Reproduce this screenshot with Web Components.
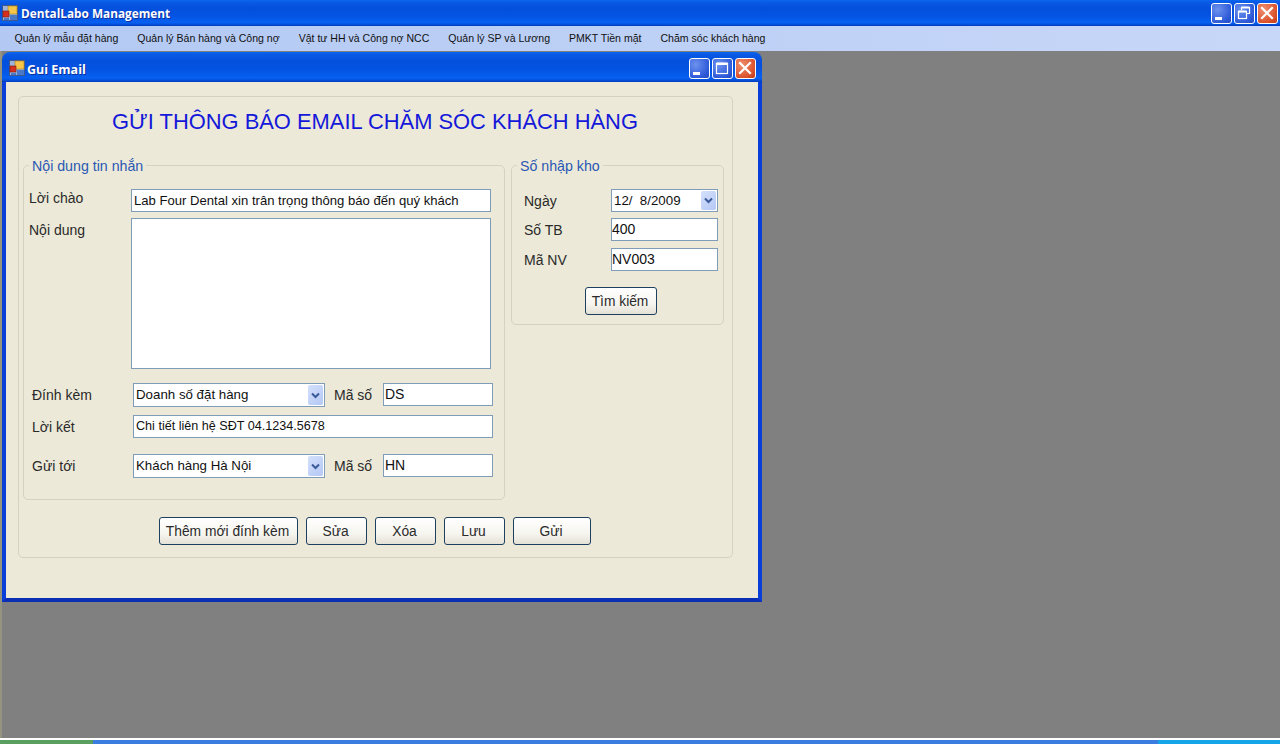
<!DOCTYPE html>
<html lang="vi">
<head>
<meta charset="utf-8">
<title>DentalLabo Management</title>
<style>
  html, body { margin: 0; height: 100%; overflow: hidden; background: #808080; }
</style>
</head>
<body>

<xp-desktop>
  <xp-titlebar slot="title" height="26" icon-left="2" gap="3" right="2" top="0" text="11.8" shift="0" radius="0">DentalLabo Management</xp-titlebar>
  <xp-menubar slot="menu">
    <xp-menuitem>Quản lý mẫu đặt hàng</xp-menuitem>
    <xp-menuitem>Quản lý Bán hàng và Công nợ</xp-menuitem>
    <xp-menuitem>Vật tư HH và Công nợ NCC</xp-menuitem>
    <xp-menuitem>Quản lý SP và Lương</xp-menuitem>
    <xp-menuitem>PMKT Tiền mặt</xp-menuitem>
    <xp-menuitem>Chăm sóc khách hàng</xp-menuitem>
  </xp-menubar>
  <xp-window>
    <xp-titlebar slot="title" height="30" icon-left="7" gap="2" right="6" top="2" text="12.5" shift="2" radius="8" size="maximize">Gui Email</xp-titlebar>
    <email-form></email-form>
  </xp-window>
</xp-desktop>

<script>
const FONT = `"Liberation Sans", Arial, sans-serif`

const APP_ICON = /*html*/`
  <svg width="16" height="16" viewBox="0 0 16 16" aria-hidden="true">
    <rect x="0.5" y="0.5" width="15" height="15" fill="#9db4d8" stroke="#3d5a90"/>
    <rect x="6" y="1" width="9" height="8" fill="#f6c64a" stroke="#a97f1c" stroke-width="0.6"/>
    <rect x="1" y="6" width="6" height="6" fill="#d8301f" stroke="#7d1a10" stroke-width="0.6"/>
    <rect x="8" y="10" width="7" height="5" fill="#4b78c8"/>
    <rect x="2" y="13" width="5" height="2" fill="#4b78c8"/>
  </svg>`

const GLYPHS = {
  min: `<rect x="4" y="14" width="7" height="3" fill="#fff"/>`,
  restore: `<path d="M7.5 7V4.5h8v6H13" fill="none" stroke="#fff" stroke-width="1.2"/><rect x="7.5" y="3.5" width="8" height="2" fill="#fff"/><rect x="4.5" y="8.5" width="8" height="7" fill="none" stroke="#fff" stroke-width="1.2"/><rect x="4.5" y="7.5" width="8" height="2" fill="#fff"/>`,
  maximize: `<rect x="4.5" y="5.5" width="11" height="10" fill="none" stroke="#fff" stroke-width="1.2"/><rect x="4.5" y="4.5" width="11" height="2.5" fill="#fff"/>`,
  close: `<path d="M5 5l10 10M15 5L5 15" stroke="#fff" stroke-width="2.2" stroke-linecap="square"/>`
}

class XpTitlebar extends HTMLElement {
  constructor () {
    super()
    this.shadow = this.attachShadow({ mode: 'open' })
  }

  connectedCallback () {
    const height = this.getAttribute('height')
    const iconLeft = this.getAttribute('icon-left')
    const gap = this.getAttribute('gap')
    const right = this.getAttribute('right')
    const top = this.getAttribute('top')
    const text = this.getAttribute('text')
    const shift = this.getAttribute('shift')
    const radius = this.getAttribute('radius')
    const size = this.getAttribute('size') || 'restore'
    const button = (name, red) => /*html*/`
      <span class="cap ${red ? 'red' : ''}">
        <svg width="21" height="21" viewBox="0 0 21 21" aria-hidden="true">${GLYPHS[name]}</svg>
      </span>`

    this.shadow.innerHTML = /*html*/`
    <style>
      :host {
        display: flex;
        align-items: center;
        box-sizing: border-box;
        height: ${height}px;
        padding: ${top}px ${right}px 0 ${iconLeft}px;
        gap: ${gap}px;
        color: #fff;
        font: bold ${text}px "Open Sans", ${FONT};
        text-shadow: 1px 1px 0 #0f2f9c;
        background: linear-gradient(180deg, #0a66ee 0, #0a5ae6 8%, #0350dc 30%, #0453e2 60%, #0761f2 86%, #0350dc 94%, #0238b8 100%);
        border-radius: ${radius}px ${radius}px 0 0;
      }
      svg { display: block; flex: none; }
      .text { flex: 1; white-space: nowrap; padding-top: ${shift}px; }
      .caps { display: flex; gap: 2px; }
      .cap {
        width: 19px;
        height: 19px;
        border: 1px solid #fff;
        border-radius: 3px;
        background: radial-gradient(circle at 30% 30%, #6d92ee, #2e5ad8 70%, #2348c0);
        overflow: hidden;
      }
      .cap svg { margin: -1px; }
      .red { background: radial-gradient(circle at 30% 30%, #ee9070, #dc5530 65%, #c03a18); }
    </style>
    ${APP_ICON}
    <span class="text"><slot></slot></span>
    <span class="caps">${button('min')}${button(size)}${button('close', true)}</span>
    `
  }
}

class XpMenubar extends HTMLElement {
  constructor () {
    super()
    this.attachShadow({ mode: 'open' }).innerHTML = /*html*/`
    <style>
      :host {
        display: flex;
        align-items: center;
        box-sizing: border-box;
        height: 25px;
        padding: 0 0 1px 5px;
        background: linear-gradient(90deg, #b3c9f3, #c7d7f8);
        font: 10.55px ${FONT};
        color: #111;
      }
    </style>
    <slot></slot>
    `
  }
}

class XpMenuitem extends HTMLElement {
  constructor () {
    super()
    this.attachShadow({ mode: 'open' }).innerHTML = /*html*/`
    <style>
      :host { display: block; padding: 0 9.5px; white-space: nowrap; }
    </style>
    <slot></slot>
    `
  }
}

class XpDesktop extends HTMLElement {
  constructor () {
    super()
    this.attachShadow({ mode: 'open' }).innerHTML = /*html*/`
    <style>
      :host {
        display: flex;
        flex-direction: column;
        height: 744px;
        background: #808080;
      }
      .mdi {
        flex: 1;
        padding: 1px 0 0 0;
        border-left: 2px solid #93937f;
      }
      .taskbar {
        display: flex;
        height: 4px;
        border-top: 2px solid #fff;
        background: #3a7ce0;
      }
      .start { width: 93px; background: #5a9f60; }
      .space { flex: 1; }
      .tray { width: 122px; background: #17a5ea; }
    </style>
    <slot name="title"></slot>
    <slot name="menu"></slot>
    <div class="mdi"><slot></slot></div>
    <div class="taskbar"><div class="start"></div><div class="space"></div><div class="tray"></div></div>
    `
  }
}

class XpWindow extends HTMLElement {
  constructor () {
    super()
    this.attachShadow({ mode: 'open' }).innerHTML = /*html*/`
    <style>
      :host {
        display: block;
        width: 760px;
      }
      .client {
        height: 516px;
        background: #ece9d8;
        border: solid #0a3ed8;
        border-width: 0 4px 4px;
        border-bottom-color: #0a2fb4;
      }
    </style>
    <slot name="title"></slot>
    <div class="client"><slot></slot></div>
    `
  }
}

class XpGroup extends HTMLElement {
  constructor () {
    super()
    this.shadow = this.attachShadow({ mode: 'open' })
  }

  connectedCallback () {
    this.shadow.innerHTML = /*html*/`
    <style>
      :host { display: block; }
      fieldset {
        margin: 0;
        padding: 0;
        height: 100%;
        box-sizing: border-box;
        border: 1px solid #d6d2c0;
        border-radius: 5px;
        min-width: 0;
      }
      legend {
        margin-left: 5px;
        padding: 0 3px;
        height: 16px;
        font: 14.2px/18px ${FONT};
        color: #2a58b4;
      }
    </style>
    <fieldset>
      <legend>${this.getAttribute('legend')}</legend>
      <slot></slot>
    </fieldset>
    `
  }
}

class XpInput extends HTMLElement {
  constructor () {
    super()
    this.attachShadow({ mode: 'open' }).innerHTML = /*html*/`
    <style>
      :host {
        display: block;
        box-sizing: border-box;
        height: 23px;
        padding: 0 2px;
        background: #fff;
        border: 1px solid #7f9db9;
        font: 13.1px/21px ${FONT};
        color: #111;
        white-space: nowrap;
        overflow: hidden;
      }
    </style>
    <slot></slot>
    `
  }
}

class XpCombo extends HTMLElement {
  constructor () {
    super()
    this.attachShadow({ mode: 'open' }).innerHTML = /*html*/`
    <style>
      :host {
        display: flex;
        box-sizing: border-box;
        height: 24px;
        padding: 1px 1px 1px 2px;
        background: #fff;
        border: 1px solid #7f9db9;
        font: 13.3px/20px ${FONT};
        color: #111;
        white-space: pre;
      }
      .value { flex: 1; }
      .arrow {
        display: flex;
        align-items: center;
        justify-content: center;
        width: 15px;
        background: linear-gradient(135deg, #d4e0fb, #b4c8f5);
        border-radius: 2px;
      }
    </style>
    <span class="value"><slot></slot></span>
    <span class="arrow">
      <svg width="9" height="7" viewBox="0 0 9 7" aria-hidden="true"><path d="M1 1.5l3.5 3.5L8 1.5" fill="none" stroke="#3a5a9a" stroke-width="2"/></svg>
    </span>
    `
  }
}

class XpButton extends HTMLElement {
  constructor () {
    super()
    this.attachShadow({ mode: 'open' }).innerHTML = /*html*/`
    <style>
      :host {
        display: flex;
        align-items: center;
        justify-content: center;
        box-sizing: border-box;
        height: 28px;
        padding-right: 2px;
        border: 1px solid #1f3f5f;
        border-radius: 3px;
        background: linear-gradient(180deg, #fff 0, #f6f5ef 60%, #e4e1d6 100%);
        font: 13.8px ${FONT};
        color: #2a2a2a;
        white-space: nowrap;
      }
    </style>
    <slot></slot>
    `
  }
}

class EmailForm extends HTMLElement {
  constructor () {
    super()
    this.attachShadow({ mode: 'open' }).innerHTML = /*html*/`
    <style>
      :host { display: block; padding: 14px 0 0 12px; }
      .panel {
        box-sizing: border-box;
        width: 715px;
        height: 462px;
        padding-left: 4px;
        border: 1px solid #d6d2c0;
        border-radius: 5px;
        font: 14px ${FONT};
        color: #2a2a2a;
      }
      h1 {
        margin: 0 0 10px -5px;
        height: 50px;
        font: 21.9px/50px ${FONT};
        color: #1418d8;
        text-align: center;
      }
      .groups { display: flex; gap: 6px; align-items: flex-start; }
      .message { width: 482px; height: 343px; }
      .stock { width: 213px; height: 168px; }
      .message-body { display: flex; flex-direction: column; padding: 16px 0 0 5px; }
      .row { display: flex; align-items: center; }
      .top { align-items: flex-start; }
      .top .label { line-height: 24px; }
      .label-main { width: 102px; flex: none; }
      .raised { padding-bottom: 5px; }
      .inset { padding-left: 3px; }
      .inset .label-main { width: 101px; }
      .code { width: 49px; margin-left: 9px; flex: none; }
      .wide { width: 360px; }
      .contact { font-size: 12.6px; }
      .note { width: 360px; height: 151px; }
      .attach { width: 192px; }
      .short { width: 110px; align-self: flex-start; font-size: 14px; padding: 0 1px; }
      .stock-body { display: flex; flex-direction: column; padding: 16px 0 0 12px; }
      .stock-label { width: 87px; flex: none; }
      .stock-field { width: 107px; }
      .stock-date { height: 23px; }
      .stock-text { font-size: 14px; padding: 0; }
      .find { width: 72px; margin: 16px 0 0 61px; }
      .actions { display: flex; gap: 8px; padding: 17px 0 0 136px; }
    </style>
    <section class="panel">
      <h1>GỬI THÔNG BÁO EMAIL CHĂM SÓC KHÁCH HÀNG</h1>
      <div class="groups">
        <xp-group class="message" legend="Nội dung tin nhắn">
          <div class="message-body">
            <div class="row">
              <span class="label-main raised">Lời chào</span>
              <xp-input class="wide">Lab Four Dental xin trân trọng thông báo đến quý khách</xp-input>
            </div>
            <div class="row top" style="margin-top: 6px">
              <span class="label label-main">Nội dung</span>
              <xp-input class="note"></xp-input>
            </div>
            <div class="row inset" style="margin-top: 14px">
              <span class="label-main">Đính kèm</span>
              <xp-combo class="attach">Doanh số đặt hàng</xp-combo>
              <span class="code">Mã số</span>
              <xp-input class="short">DS</xp-input>
            </div>
            <div class="row inset" style="margin-top: 8px">
              <span class="label-main">Lời kết</span>
              <xp-input class="wide contact">Chi tiết liên hệ SĐT 04.1234.5678</xp-input>
            </div>
            <div class="row inset" style="margin-top: 16px">
              <span class="label-main">Gửi tới</span>
              <xp-combo class="attach">Khách hàng Hà Nội</xp-combo>
              <span class="code">Mã số</span>
              <xp-input class="short">HN</xp-input>
            </div>
          </div>
        </xp-group>
        <xp-group class="stock" legend="Số nhập kho">
          <div class="stock-body">
            <div class="row">
              <span class="stock-label">Ngày</span>
              <xp-combo class="stock-field stock-date">12/  8/2009</xp-combo>
            </div>
            <div class="row" style="margin-top: 6px">
              <span class="stock-label">Số TB</span>
              <xp-input class="stock-field stock-text">400</xp-input>
            </div>
            <div class="row" style="margin-top: 7px">
              <span class="stock-label">Mã NV</span>
              <xp-input class="stock-field stock-text">NV003</xp-input>
            </div>
            <xp-button class="find">Tìm kiếm</xp-button>
          </div>
        </xp-group>
      </div>
      <div class="actions">
        <xp-button style="width: 139px">Thêm mới đính kèm</xp-button>
        <xp-button style="width: 61px">Sửa</xp-button>
        <xp-button style="width: 61px">Xóa</xp-button>
        <xp-button style="width: 61px">Lưu</xp-button>
        <xp-button style="width: 78px">Gửi</xp-button>
      </div>
    </section>
    `
  }
}

customElements.define('xp-titlebar', XpTitlebar)
customElements.define('xp-menubar', XpMenubar)
customElements.define('xp-menuitem', XpMenuitem)
customElements.define('xp-desktop', XpDesktop)
customElements.define('xp-window', XpWindow)
customElements.define('xp-group', XpGroup)
customElements.define('xp-input', XpInput)
customElements.define('xp-combo', XpCombo)
customElements.define('xp-button', XpButton)
customElements.define('email-form', EmailForm)
</script>
</body>
</html>
